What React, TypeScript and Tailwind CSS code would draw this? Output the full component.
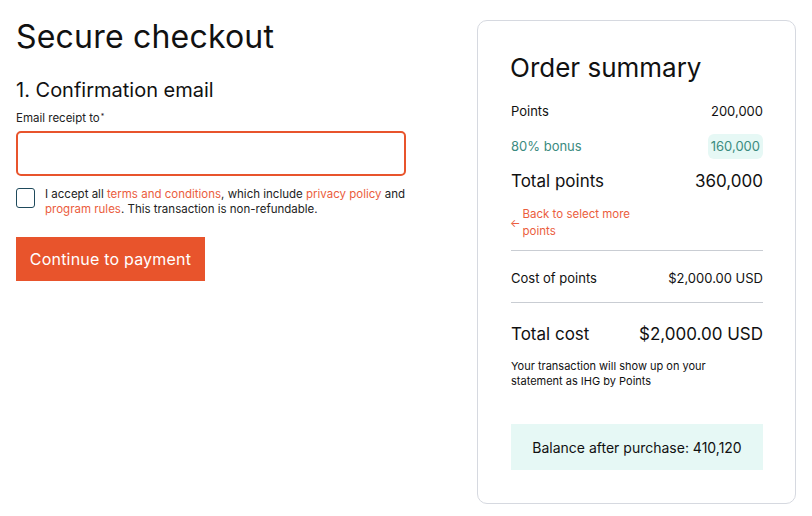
import React from "react";

export default function App() {
  return (
    <div className="w-[812px] h-[516px] bg-white flex text-[#111] overflow-hidden" style={{ fontFamily: "Inter, 'Liberation Sans', sans-serif" }}>
      <div className="w-[477px] pl-4 pr-[71px] pt-[17px]">
        <h1 className="text-[32px] leading-[40px] font-normal tracking-[0.2px]">Secure checkout</h1>
        <h2 className="mt-[20px] text-[20px] leading-[26px] font-normal">1. Confirmation email</h2>
        <div className="mt-[7px] text-[11.5px] leading-[16px] text-[#222]">Email receipt to<sup className="text-[7px] ml-[1px]">*</sup></div>
        <input className="mt-[5px] w-[390px] h-[45px] border-2 border-[#e8542c] rounded-[5px] outline-none px-3" />
        <div className="mt-[11px] flex gap-[10px]">
          <div className="w-[19px] h-[20px] shrink-0 mt-[1px] border-[1.5px] border-[#1f4a5c] rounded-[3px]" />
          <p className="text-[11.5px] leading-[15px] text-[#222]">
            I accept all <span className="text-[#eb5d3d]">terms and conditions</span>, which include <span className="text-[#eb5d3d]">privacy policy</span> and <span className="text-[#eb5d3d]">program rules</span>. This transaction is non-refundable.
          </p>
        </div>
        <button className="mt-[20px] h-[44px] w-[189px] bg-[#e8542c] text-white text-[16px] tracking-[0.2px]">Continue to payment</button>
      </div>
      <div className="mt-[20px] w-[319px] h-[484px] border border-[#d6d9e0] rounded-[10px] pl-[33px] pr-[32px] pt-[30px] flex flex-col">
        <h2 className="text-[26px] leading-[34px] font-normal -ml-[1px]">Order summary</h2>
        <div className="mt-[16px] flex justify-between items-center h-[22px] text-[13px]">
          <span>Points</span><span>200,000</span>
        </div>
        <div className="mt-[11px] flex justify-between items-center h-[25px] text-[13px] text-[#3b8b7f]">
          <span>80% bonus</span><span className="bg-[#e6f8f5] rounded-[6px] px-[3px] h-[25px] flex items-center">160,000</span>
        </div>
        <div className="mt-[10px] flex justify-between items-center h-[26px] text-[17px]">
          <span>Total points</span><span>360,000</span>
        </div>
        <div className="mt-[11px] flex items-center gap-[2px] -ml-[1px] text-[11.5px] leading-[17px] text-[#eb5d3d]">
          <span className="text-[11px]">←</span>
          <span className="w-[120px]">Back to select more points</span>
        </div>
        <div className="mt-[10px] border-t border-[#c9cdd3]" />
        <div className="flex justify-between items-center pt-[4px] h-[51px] text-[13px]">
          <span>Cost of points</span><span>$2,000.00 USD</span>
        </div>
        <div className="border-t border-[#c9cdd3]" />
        <div className="mt-[20px] flex justify-between items-center h-[24px] text-[17px]">
          <span>Total cost</span><span>$2,000.00 USD</span>
        </div>
        <p className="mt-[12px] text-[11px] leading-[15px] w-[210px]">Your transaction will show up on your statement as IHG by Points</p>
        <div className="mt-[35px] h-[46px] bg-[#e6f8f5] flex items-center justify-center text-[14px]">Balance after purchase: 410,120</div>
      </div>
    </div>
  );
}
